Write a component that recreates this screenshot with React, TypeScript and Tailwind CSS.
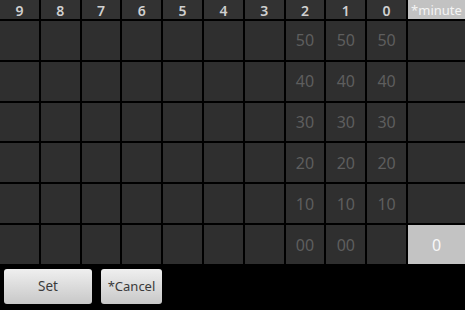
import React from "react";

const headers = ["9", "8", "7", "6", "5", "4", "3", "2", "1", "0"];
const values = ["50", "40", "30", "20", "10", "00"];

function cellText(row: number, col: number): string {
  if (col === 7 || col === 8) return values[row];
  if (col === 9 && row < 5) return values[row];
  return "";
}

export default function App() {
  return (
    <div
      className="w-[465px] h-[310px] bg-black overflow-hidden"
      style={{ fontFamily: '"Noto Sans", "Open Sans", sans-serif' }}
    >
      <div className="grid h-[264px] grid-cols-[repeat(10,minmax(0,1fr))_57px] grid-rows-[19px_repeat(6,minmax(0,1fr))] gap-[2px]">
        {headers.map((h) => (
          <div
            key={h}
            className="bg-[#323232] text-[#d0d0d0] text-[14px] font-semibold flex items-center justify-center pt-[2px] leading-none"
          >
            {h}
          </div>
        ))}
        <div className="bg-[#c2c2c2] text-[#f4f4f4] text-[13px] flex items-center justify-center leading-none pt-[1px]">
          *minute
        </div>
        {values.map((_, r) => (
          <React.Fragment key={r}>
            {headers.map((_, c) => (
              <div
                key={c}
                className="bg-[#2f2f2f] text-[#5e5e5e] text-[16px] flex items-center justify-center leading-none"
              >
                {cellText(r, c)}
              </div>
            ))}
            {r === 5 ? (
              <div className="bg-[#c3c3c3] text-[#f8f8f8] text-[16px] flex items-center justify-center leading-none">
                0
              </div>
            ) : (
              <div className="bg-[#2f2f2f]" />
            )}
          </React.Fragment>
        ))}
      </div>
      <div className="flex gap-[9px] pl-[4px] pt-[5px]">
        <button className="w-[88px] h-[35px] rounded-[3px] bg-gradient-to-b from-[#efefef] to-[#c8c8c8] text-[#3a3a3a] text-[13.5px] flex items-center justify-center">
          Set
        </button>
        <button className="w-[61px] h-[35px] rounded-[3px] bg-gradient-to-b from-[#efefef] to-[#c8c8c8] text-[#3a3a3a] text-[13px] flex items-center justify-center">
          *Cancel
        </button>
      </div>
    </div>
  );
}
